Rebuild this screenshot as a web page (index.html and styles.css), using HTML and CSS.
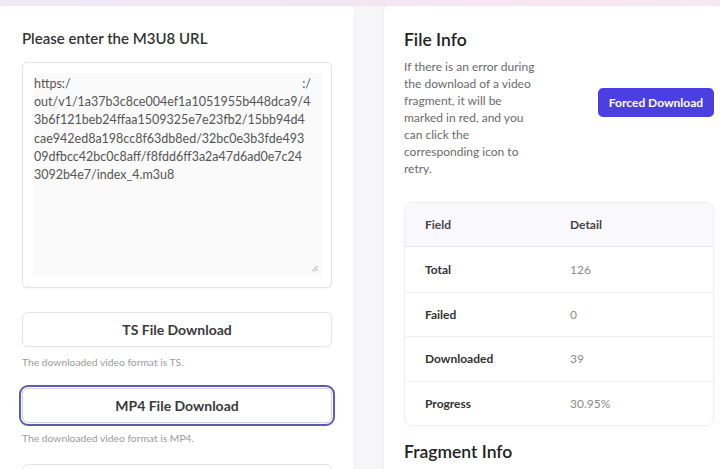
FILE: index.html
```html
<!DOCTYPE html>
<html lang="en">
<head>
<meta charset="utf-8">
<title>M3U8 Downloader</title>
<link rel="stylesheet" href="styles.css">
</head>
<body>
<div class="topbar"></div>
<main class="layout">
  <section class="card left">
    <h1 class="label">Please enter the M3U8 URL</h1>
    <div class="url-box">
      <div class="url-area">
        <div class="url-line first"><span>https:/</span><span class="tail">:/</span></div>
        <div class="url-line">out/v1/1a37b3c8ce004ef1a1051955b448dca9/4</div>
        <div class="url-line">3b6f121beb24ffaa1509325e7e23fb2/15bb94d4</div>
        <div class="url-line">cae942ed8a198cc8f63db8ed/32bc0e3b3fde493</div>
        <div class="url-line">09dfbcc42bc0c8aff/f8fdd6ff3a2a47d6ad0e7c24</div>
        <div class="url-line">3092b4e7/index_4.m3u8</div>
        <svg class="resize" width="7" height="7" viewBox="0 0 7 7"><path d="M1 6.5L6.5 1M4 6.5L6.5 4" stroke="#999" stroke-width="0.9"/></svg>
      </div>
    </div>
    <button class="dl-btn">TS File Download</button>
    <p class="note">The downloaded video format is TS.</p>
    <button class="dl-btn focused">MP4 File Download</button>
    <p class="note">The downloaded video format is MP4.</p>
    <button class="dl-btn"></button>
  </section>
  <section class="card right">
    <div class="info-head">
      <div class="info-text">
        <h2 class="title">File Info</h2>
        <p class="desc">If there is an error during the download of a video fragment, it will be marked in red, and you can click the corresponding icon to retry.</p>
      </div>
      <button class="force-btn">Forced Download</button>
    </div>
    <div class="table">
      <div class="row head"><span class="field">Field</span><span class="detail">Detail</span></div>
      <div class="row"><span class="field">Total</span><span class="detail">126</span></div>
      <div class="row"><span class="field">Failed</span><span class="detail">0</span></div>
      <div class="row"><span class="field">Downloaded</span><span class="detail">39</span></div>
      <div class="row"><span class="field">Progress</span><span class="detail">30.95%</span></div>
    </div>
    <h2 class="title frag">Fragment Info</h2>
  </section>
</main>
</body>
</html>
```

FILE: styles.css
```css
* { box-sizing: border-box; }
html, body { margin: 0; padding: 0; }
body {
  background: #f6f6f8;
  font-family: Lato, "Noto Sans", sans-serif;
  color: #333;
  height: 469px;
  overflow: hidden;
}
.topbar {
  height: 6px;
  background: linear-gradient(90deg, #efe9f6 0%, #f1e6f4 40%, #f9e5f0 80%, #f6e8f2 100%);
}
.layout {
  display: flex;
  gap: 30px;
  align-items: flex-start;
}
.card {
  background: #fff;
  height: 463px;
  overflow: hidden;
}
.left {
  width: 353px;
  flex: none;
  padding: 22px 21px 0 22px;
}
.right {
  flex: 1;
  padding: 23px 6px 0 20px;
  border-radius: 6px 0 0 0;
  border-left: 1px solid #f0f0f2;
}
.label {
  margin: 0;
  font-size: 15px;
  line-height: 20px;
  font-weight: 600;
  color: #333;
}
.url-box {
  margin-top: 14px;
  height: 226px;
  border: 1px solid #e2e2e2;
  border-radius: 5px;
  padding: 10px 9px 11px 10px;
  box-shadow: 0 1px 2px rgba(0,0,0,0.04);
}
.url-area {
  position: relative;
  height: 100%;
  background: #fafafa;
  padding: 2px 0 0 1px;
  font-size: 12.5px;
  line-height: 18.2px;
  color: #555;
  white-space: nowrap;
}
.url-line.first {
  display: flex;
  justify-content: space-between;
  padding-right: 11px;
}
.resize {
  position: absolute;
  right: 4px;
  bottom: 4px;
}
.dl-btn {
  display: block;
  width: 310px;
  height: 35px;
  margin: 24px 0 0 0;
  background: #fff;
  border: 1px solid #e4e4e6;
  border-radius: 6px;
  font-family: Lato, "Noto Sans", sans-serif;
  font-size: 14px;
  font-weight: 700;
  color: #3a3a3a;
  box-shadow: 0 1px 2px rgba(0,0,0,0.03);
}
.dl-btn.focused {
  margin-top: 20px;
  border-color: #cfd0ea;
  outline: 2px solid #5c5cae;
  outline-offset: 1px;
}
.note + .dl-btn { margin-top: 20px; }
.note {
  margin: 9px 0 0 0;
  font-size: 10.3px;
  line-height: 12px;
  color: #9a9a9a;
}
.info-head {
  display: flex;
  justify-content: space-between;
  align-items: center;
}
.info-text { width: 138px; }
.title {
  margin: 0;
  font-size: 17.5px;
  line-height: 22px;
  font-weight: 600;
  color: #222;
}
.desc {
  margin: 7px 0 0 0;
  font-size: 12px;
  line-height: 17px;
  color: #6a6a6a;
}
.force-btn {
  width: 116px;
  height: 29px;
  background: #4b3fe2;
  color: #fff;
  border: none;
  border-radius: 5px;
  font-family: Lato, "Noto Sans", sans-serif;
  font-size: 12px;
  font-weight: 700;
  margin-top: -2px;
}
.table {
  margin-top: 25px;
  border: 1px solid #eeeef0;
  border-radius: 8px;
  overflow: hidden;
  box-shadow: 0 1px 3px rgba(0,0,0,0.04);
}
.row {
  display: flex;
  align-items: center;
  height: 44.5px;
  padding-left: 20px;
  border-top: 1px solid #eeeef0;
  font-size: 12px;
}
.row:first-child { border-top: none; }
.row.head {
  height: 44px;
  background: #f9f9fb;
  border-bottom: 1px solid #e6e6ea;
}
.row.head + .row { border-top: none; }
.field {
  width: 145px;
  font-weight: 700;
  color: #333;
}
.detail { color: #8a8a8a; }
.row.head .field, .row.head .detail { font-weight: 700; color: #444; }
.frag { margin-top: 15px; }
```
